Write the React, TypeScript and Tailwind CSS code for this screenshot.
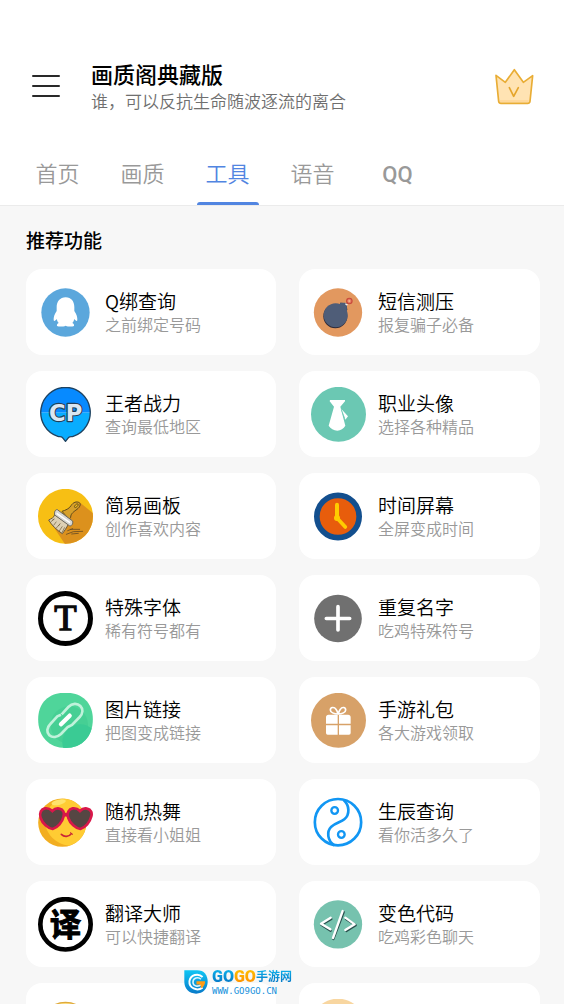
import React, { useState } from 'react';

interface Tool {
  title?: string;
  desc?: string;
  icon: React.ReactNode;
}

const TABS = ['首页', '画质', '工具', '语音', 'QQ'];

const Icon: React.FC<{ box: string; children: React.ReactNode }> = ({ box, children }) => (
  <svg viewBox={box} className="w-[55px] h-[55px] shrink-0" fill="none" aria-hidden="true">
    {children}
  </svg>
);

const PenguinIcon = () => (
  <Icon box="54 73 165 165">
    <circle cx="136.500" cy="155.500" r="72.500" fill="#5ba7dc" />
    <path
      d="M137 110c-17 0-27 13-27 29v12c-6 8-10 19-9 28 2 5 6 0 9-4 1 5 3 9 6 12-4 2-6 5-5 9 7 3 19 2 26-1 7 3 18 4 25 1 1-4-1-7-5-9 3-3 5-7 6-12 3 4 7 9 9 4 1-9-3-20-9-28v-12c0-16-9-29-26-29z"
      fill="#fff"
    />
  </Icon>
);

const BombIcon = () => (
  <Icon box="63 73 165 165">
    <circle cx="144" cy="155.500" r="72.500" fill="#e2985f" />
    <circle cx="136" cy="167" r="36" fill="#2f2a38" />
    <path d="M149 134l2-8 18 2 3 20-6 4z" fill="#2f2a38" />
    <circle cx="137" cy="164" r="36" fill="#4f5d78" />
    <path d="M148 134l3-8h14l6 5-1 34z" fill="#4f5d78" />
    <path d="M165 131l3-4 6 2-3 6z" fill="#f6eee6" />
    <path d="M170 130l7-8" stroke="#5b2a2e" strokeWidth="3" />
    <circle cx="178" cy="121" r="10" fill="#c94a3c" />
    <circle cx="178" cy="121" r="5" fill="#f3b08a" stroke="#e57a5f" strokeWidth="3" />
  </Icon>
);

const PowerIcon = () => (
  <Icon box="54 379 165 165">
    <clipPath id="power-pin">
      <path d="M136.500 380a75.500 75.500 0 0 1 23 147c-6 2-10-1-14 4l-9 11-9-11c-4-5-8-2-14-4a75.500 75.500 0 0 1 23-147z" />
    </clipPath>
    <g clipPath="url(#power-pin)">
      <rect x="54" y="376" width="166" height="80" fill="#078aff" />
      <rect x="54" y="456" width="166" height="90" fill="#08adff" />
    </g>
    <path
      d="M136.500 380a75.500 75.500 0 0 1 23 147c-6 2-10-1-14 4l-9 11-9-11c-4-5-8-2-14-4a75.500 75.500 0 0 1 23-147z"
      stroke="#1e4260"
      strokeWidth="4"
      strokeLinejoin="round"
    />
    <text
      x="137"
      y="481"
      textAnchor="middle"
      className="font-['DejaVu_Sans',sans-serif] text-[68px] font-bold"
      fill="#dbe7f2"
      stroke="#243f59"
      strokeWidth="7"
      strokeLinejoin="round"
      paintOrder="stroke"
    >
      CP
    </text>
  </Icon>
);

const TieIcon = () => (
  <Icon box="63 379 165 165">
    <circle cx="145.500" cy="461" r="82.500" fill="#6bc8b3" />
    <path d="M120 418h45v4l-14 16 15 57c-5 9-14 14-24 15-11-1-20-6-26-15l16-57-13-16z" fill="#fff" />
    <path d="M154 445l20 22-8 10z" fill="#fff" />
    <path d="M154 447l10 26" stroke="#6bc8b3" strokeWidth="2" />
  </Icon>
);

const BrushIcon = () => (
  <Icon box="54 70 165 165">
    <clipPath id="brush-disc">
      <circle cx="136.500" cy="152" r="82.500" />
    </clipPath>
    <g clipPath="url(#brush-disc)">
      <rect x="54" y="68" width="166" height="168" fill="#f7bf14" />
      <path d="M178 109l44 36v92h-86l-49-74 40 25z" fill="#dc911d" />
    </g>
    <path
      d="M126 137c10-3 22-8 27-17 6-10 17-14 25-9 6 5 1 14-7 20-9 7-19 12-19 24l-5 6z"
      fill="#d6a02b"
      stroke="#5e481d"
      strokeWidth="3"
    />
    <ellipse cx="169" cy="120" rx="7" ry="3.500" transform="rotate(-45 169 120)" fill="#f7bf14" stroke="#5e481d" strokeWidth="2.500" />
    <path d="M104 147c-1 8-10 12-18 16 9 16 23 29 41 41 6-8 12-16 18-28z" fill="#ddd0b4" stroke="#6a5737" strokeWidth="3" strokeLinejoin="round" />
    <path d="M93 168l10-8M101 179l8-11M108 188l11-12M117 197l10-15M126 201l8-16M97 163l6-3M115 181l6-8" stroke="#6a5737" strokeWidth="2" />
    <path d="M112 132l46 34c2 9-4 17-10 14l-44-32c-2-9 2-17 8-16z" fill="#d9d8d3" stroke="#6c675c" strokeWidth="3" />
    <path d="M110 143l40 28" stroke="#fff" strokeWidth="4" />
    <path d="M143 195l15-6M151 191h28M139 206l21-8 28-1M155 205l20-2" stroke="#6a4d24" strokeWidth="2.500" strokeLinecap="round" />
  </Icon>
);

const ClockIcon = () => (
  <Icon box="63 70 165 165">
    <circle cx="144" cy="152.500" r="63.500" fill="#e85d0c" stroke="#134f8e" strokeWidth="17" />
    <path d="M141 117v41" stroke="#ffcc00" strokeWidth="12" strokeLinecap="round" />
    <path d="M141 157l25 27" stroke="#ffcc00" strokeWidth="11" strokeLinecap="round" />
    <circle cx="141" cy="157" r="9" fill="#ffcc00" />
  </Icon>
);

const FontIcon = () => (
  <Icon box="54 376 165 165">
    <circle cx="136.500" cy="458.500" r="75" fill="#fff" stroke="#000" strokeWidth="15" />
    <text x="136.500" y="494" textAnchor="middle" className="font-['Liberation_Serif',serif] text-[110px]" fill="#0a0a0a" stroke="#0a0a0a" strokeWidth="4">
      T
    </text>
  </Icon>
);

const PlusIcon = () => (
  <Icon box="63 376 165 165">
    <circle cx="144" cy="458.500" r="71.500" fill="#707070" />
    <path d="M144 423v70M109 458.500h70" stroke="#fff" strokeWidth="11" strokeLinecap="round" />
  </Icon>
);

const LinkIcon = () => (
  <Icon box="54 67 165 165">
    <clipPath id="link-shape">
      <path d="M136.500 66c50 0 82 30 82 80 0 52-32 86-82 86s-82-34-82-86c0-50 32-80 82-80z" />
    </clipPath>
    <g clipPath="url(#link-shape)">
      <rect x="54" y="64" width="166" height="170" fill="#4fd59a" />
      <circle cx="148" cy="163" r="56" fill="#46cf94" />
      <circle cx="181" cy="215" r="54" fill="#3acb94" />
    </g>
    <path
      d="M125 131l20-22c12-12 27-12 36-3 9 9 8 22-2 33l-23 24-11 5M123 132l-11 5-21 23c-11 11-12 25-3 34 10 8 24 6 35-4l22-23"
      stroke="#c0f2db"
      strokeWidth="8"
    />
    <path d="M123 161l26-26" stroke="#fff" strokeWidth="13" strokeLinecap="round" />
  </Icon>
);

const GiftIcon = () => (
  <Icon box="63 67 165 165">
    <circle cx="145.500" cy="149" r="82.500" fill="#d7a168" />
    <path d="M108 140q0-8 8-8h27v27h-35zM147 132h27q8 0 8 8v19h-35zM108 164h35v28h-30q-5 0-5-5zM147 164h35v23q0 5-5 5h-30z" fill="#fff" />
    <path
      d="M144 130c-12 0-23-5-23-12 0-9 12-10 17-2 3 4 5 9 6 14zM145 130c11 0 22-5 22-12 0-9-11-10-16-2-3 4-5 9-6 14z"
      stroke="#fff"
      strokeWidth="5"
    />
  </Icon>
);

const HEART = 'M2 29C-12 27-29 12-34-4c-5-16 2-27 13-29 9-1 16 2 22 8 6-6 13-9 21-7 12 2 17 13 12 26C31 8 17 25 2 29z';

const EmojiIcon = () => (
  <Icon box="54 373 165 165">
    <circle cx="127" cy="456" r="72.500" fill="#f2ae21" />
    <path d="M132 384c37 2 67 33 67 72 0 34-22 60-52 69-40-5-72-37-72-75 0-34 25-60 57-66z" fill="#ffcc33" />
    <ellipse cx="116" cy="395" rx="22" ry="8" transform="rotate(-12 116 395)" fill="#ffe36c" />
    <path d="M124 429c7-4 18-4 26 0l-2 12c-7-5-15-5-22 0z" fill="#d71745" />
    <path d={HEART} transform="translate(96 446)" fill="#564643" stroke="#d9174a" strokeWidth="8" />
    <path d={HEART} transform="translate(179 446)" fill="#564643" stroke="#d9174a" strokeWidth="8" />
    <path d="M124 491c9 9 22 8 30-2" stroke="#c92637" strokeWidth="5" strokeLinecap="round" />
    <path d="M151 486l7 5" stroke="#c92637" strokeWidth="3" strokeLinecap="round" />
  </Icon>
);

const YinYangIcon = () => (
  <Icon box="63 373 165 165">
    <circle cx="144" cy="454.500" r="69.500" stroke="#1196f3" strokeWidth="8" />
    <path d="M161 388c18 16 19 44 2 58-10 8-27 11-39 22-15 15-12 42 9 56" stroke="#1196f3" strokeWidth="8" />
    <circle cx="134" cy="419.500" r="10" stroke="#1196f3" strokeWidth="7" />
    <circle cx="154" cy="491.500" r="10" stroke="#1196f3" strokeWidth="7" />
  </Icon>
);

const TranslateIcon = () => (
  <Icon box="54 79 165 165">
    <circle cx="136.500" cy="161" r="75.500" fill="#fff" stroke="#000" strokeWidth="14" />
    <text x="136.500" y="196" textAnchor="middle" className="font-['Noto_Sans_CJK_SC',sans-serif] text-[94px] font-bold" fill="#000" stroke="#000" strokeWidth="3">
      译
    </text>
  </Icon>
);

const CodeIcon = () => (
  <Icon box="63 79 165 165">
    <circle cx="144" cy="161" r="72.500" fill="#76c2ae" />
    <g strokeLinecap="round" strokeLinejoin="round">
      <path d="M124 145l-30 17 28 18M168 145l29 19-28 17M161 124l-31 81" stroke="#284f4c" strokeWidth="7" />
      <path d="M122 141l-29 18 28 17M166 141l28 20-28 17M158 121l-29 81" stroke="#fff" strokeWidth="7" />
    </g>
  </Icon>
);

const CoinIcon = () => (
  <Icon box="54 385 165 165">
    <circle cx="136.500" cy="467" r="72" fill="#fbdd83" stroke="#dfaa3b" strokeWidth="4" />
  </Icon>
);

const DiscIcon = () => (
  <Icon box="63 385 165 165">
    <circle cx="144" cy="466" r="82" fill="#f8d6a0" />
  </Icon>
);

const CrownIcon = () => (
  <svg viewBox="42 36 120 111" className="w-10 h-[37px]" fill="none" aria-hidden="true">
    <path d="M48 58l28 21 27-38 27 38 28-20-8 77q-1 6-7 6H63q-6 0-7-6z" fill="#ffe3b3" stroke="#e9ad35" strokeWidth="5" strokeLinejoin="round" />
    <path d="M60 135h86" stroke="#ffd391" strokeWidth="4" />
    <path d="M88 95l13 26 14-26" stroke="#e5a52b" strokeWidth="5" strokeLinecap="round" strokeLinejoin="round" />
  </svg>
);

const TOOLS: Tool[] = [
  { title: 'Q绑查询', desc: '之前绑定号码', icon: <PenguinIcon /> },
  { title: '短信测压', desc: '报复骗子必备', icon: <BombIcon /> },
  { title: '王者战力', desc: '查询最低地区', icon: <PowerIcon /> },
  { title: '职业头像', desc: '选择各种精品', icon: <TieIcon /> },
  { title: '简易画板', desc: '创作喜欢内容', icon: <BrushIcon /> },
  { title: '时间屏幕', desc: '全屏变成时间', icon: <ClockIcon /> },
  { title: '特殊字体', desc: '稀有符号都有', icon: <FontIcon /> },
  { title: '重复名字', desc: '吃鸡特殊符号', icon: <PlusIcon /> },
  { title: '图片链接', desc: '把图变成链接', icon: <LinkIcon /> },
  { title: '手游礼包', desc: '各大游戏领取', icon: <GiftIcon /> },
  { title: '随机热舞', desc: '直接看小姐姐', icon: <EmojiIcon /> },
  { title: '生辰查询', desc: '看你活多久了', icon: <YinYangIcon /> },
  { title: '翻译大师', desc: '可以快捷翻译', icon: <TranslateIcon /> },
  { title: '变色代码', desc: '吃鸡彩色聊天', icon: <CodeIcon /> },
  { icon: <CoinIcon /> },
  { icon: <DiscIcon /> },
];

const ToolCard: React.FC<{ tool: Tool }> = ({ tool }) => (
  <button type="button" className="flex h-[86px] items-center gap-3 rounded-2xl bg-white px-3 text-left">
    {tool.icon}
    {tool.title && (
      <span className="flex min-w-0 flex-col pt-1">
        <span className="font-['Noto_Sans_CJK_SC',sans-serif] text-[19px] font-[350] leading-6 text-black">{tool.title}</span>
        <span className="text-base font-[350] leading-[26px] text-[#999]">{tool.desc}</span>
      </span>
    )}
  </button>
);

const Watermark = () => (
  <div className="absolute bottom-2 left-[184px] flex items-center gap-1">
    <svg viewBox="494 298 75 75" className="h-[26px] w-6" fill="none" aria-hidden="true">
      <defs>
        <linearGradient id="mark-blue" x1="0" y1="0" x2="0" y2="1">
          <stop offset="0" stopColor="#10c5f4" />
          <stop offset="1" stopColor="#087ac9" />
        </linearGradient>
      </defs>
      <path d="M495 299h40c22 0 33 15 33 36 0 22-15 37-36 37-22 0-37-15-37-37z" fill="url(#mark-blue)" />
      <path d="M552 320c-13-13-38-8-41 13-2 21 23 33 41 20" stroke="#fff" strokeWidth="6" />
      <path d="M547 327c-9-9-25-4-25 9 0 12 16 17 26 7" stroke="#d9f5ff" strokeWidth="5" />
      <path d="M533 333h27c0 10-4 17-12 22l-3-12h-12z" fill="#ff9c16" />
    </svg>
    <div className="flex flex-col">
      <div className="flex items-center leading-[18px]">
        <span className="bg-gradient-to-b from-[#12b9ef] to-[#0869bd] bg-clip-text text-[16px] font-black text-transparent">GO</span>
        <span className="bg-gradient-to-b from-[#ffc400] to-[#ff8600] bg-clip-text text-[16px] font-black text-transparent">GO</span>
        <span className="bg-gradient-to-b from-[#12b9ef] to-[#0869bd] bg-clip-text text-[12px] font-bold text-transparent">手游网</span>
      </div>
      <span className="font-['DejaVu_Sans_Mono',monospace] text-[9px] leading-[10px] text-[#1691dc]">WWW.GO9GO.CN</span>
    </div>
  </div>
);

const App: React.FC = () => {
  const [activeTab, setActiveTab] = useState('工具');

  return (
    <div className="relative flex h-screen flex-col overflow-hidden bg-[#f7f7f7] font-['Roboto','Noto_Sans_CJK_SC',sans-serif]">
      <header className="shrink-0 border-b border-[#ebebeb] bg-white pt-[58px]">
        <div className="flex items-center pr-[30px] pl-8">
          <button type="button" aria-label="菜单" className="flex w-7 flex-col gap-2">
            <span className="h-0.5 rounded bg-[#292929]"></span>
            <span className="h-0.5 rounded bg-[#292929]"></span>
            <span className="h-0.5 rounded bg-[#292929]"></span>
          </button>
          <div className="ml-[31px] flex-1 pt-1">
            <h1 className="text-[22px] font-medium leading-7 text-black">画质阁典藏版</h1>
            <p className="text-[17px] font-[350] leading-6 text-[#6f6f6f]">谁，可以反抗生命随波逐流的离合</p>
          </div>
          <button type="button" aria-label="会员">
            <CrownIcon />
          </button>
        </div>

        <nav className="mt-[30px] flex px-[15px]">
          {TABS.map((tab) => (
            <button
              key={tab}
              type="button"
              onClick={() => setActiveTab(tab)}
              className={`flex w-[85px] flex-col items-center text-[22px] leading-[62px] ${
                activeTab === tab ? 'text-[#5185e1]' : 'text-[#999]'
              } ${tab === 'QQ' ? 'font-medium' : 'font-[350]'}`}
            >
              <span className="h-[58px]">{tab}</span>
              <span className={`h-[3px] w-[62px] rounded-t ${activeTab === tab ? 'bg-[#5185e1]' : ''}`}></span>
            </button>
          ))}
        </nav>
      </header>

      <main className="min-h-0 flex-1 overflow-hidden pr-6 pl-[26px]">
        <h2 className="pt-[22px] pb-[13px] text-[19px] font-medium leading-7 text-black">推荐功能</h2>
        <div className="grid grid-cols-[250fr_241fr] gap-x-[23px] gap-y-4">
          {TOOLS.map((tool, i) => (
            <ToolCard key={i} tool={tool} />
          ))}
        </div>
      </main>

      <Watermark />
    </div>
  );
};

export default App;
